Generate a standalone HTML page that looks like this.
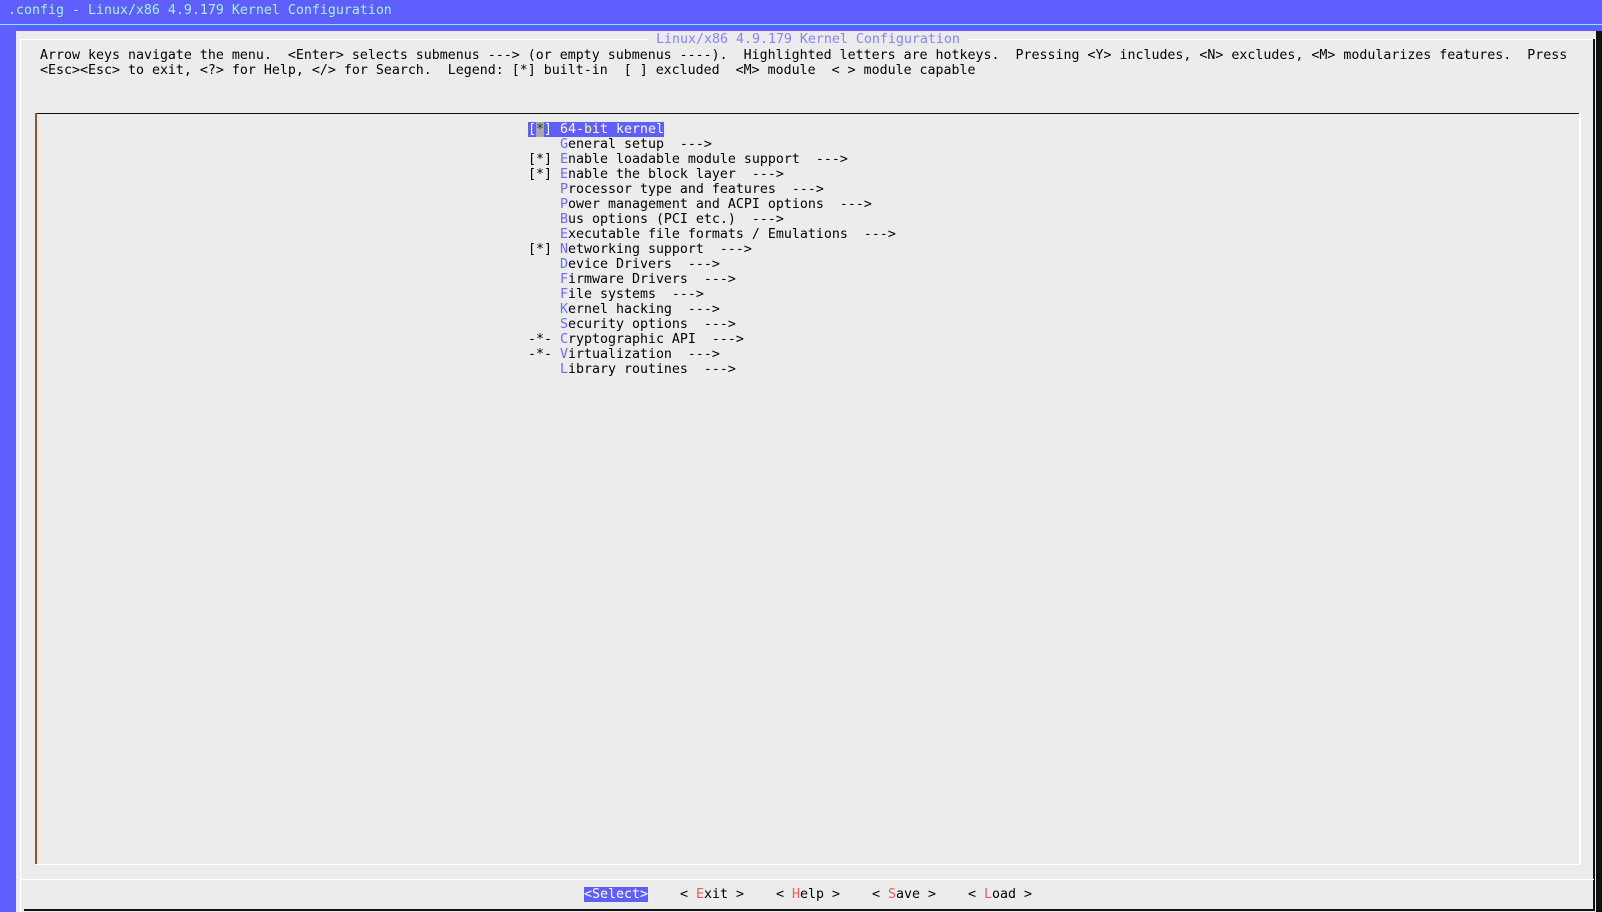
<!DOCTYPE html>
<html><head><meta charset="utf-8"><style>
html,body{margin:0;padding:0;}
body{width:1602px;height:912px;position:relative;overflow:hidden;background:#5f5fff;font-family:"DejaVu Sans Mono","Liberation Mono",monospace;font-size:13.29px;line-height:15px;color:#000;}
.t{position:absolute;white-space:pre;height:15px;margin-top:2px;}
.h{color:#6b6bff;}
.r{color:#f25a5a;}
.abs{position:absolute;}
</style></head><body>
<div class="t" style="left:8px;top:1px;color:#a8f4ff">.config - Linux/x86 4.9.179 Kernel Configuration</div>
<div class="abs" style="left:0;top:24px;width:1602px;height:1px;background:#6ff6ff"></div>
<div class="abs" style="left:1596px;top:31px;width:6px;height:881px;background:#111"></div>
<div class="abs" style="left:16px;top:31px;width:1580px;height:881px;background:#ececec"></div>
<div class="abs" style="left:20px;top:39px;width:1574px;height:1px;background:#fff"></div>
<div class="abs" style="left:20px;top:39px;width:1px;height:873px;background:#fff"></div>
<div class="abs" style="left:1593px;top:39px;width:2px;height:871px;background:#111"></div>
<div class="abs" style="left:24px;top:909px;width:1571px;height:2px;background:#111"></div>
<div class="t" style="left:648px;top:30px;padding:0 8px;background:#ececec;color:#8484ff">Linux/x86 4.9.179 Kernel Configuration</div>
<div class="t" style="left:40px;top:46px">Arrow keys navigate the menu.  &lt;Enter&gt; selects submenus ---&gt; (or empty submenus ----).  Highlighted letters are hotkeys.  Pressing &lt;Y&gt; includes, &lt;N&gt; excludes, &lt;M&gt; modularizes features.  Press</div>
<div class="t" style="left:40px;top:61px">&lt;Esc&gt;&lt;Esc&gt; to exit, &lt;?&gt; for Help, &lt;/&gt; for Search.  Legend: [*] built-in  [ ] excluded  &lt;M&gt; module  &lt; &gt; module capable</div>
<div class="abs" style="left:35px;top:113px;width:1545px;height:1px;background:#111"></div>
<div class="abs" style="left:35px;top:113px;width:2px;height:751px;background:#8a5a2a"></div>
<div class="abs" style="left:36px;top:864px;width:1545px;height:1px;background:#fff"></div>
<div class="abs" style="left:1579px;top:113px;width:2px;height:752px;background:#fff"></div>
<div class="abs" style="left:20px;top:879px;width:1574px;height:1px;background:#fff"></div>
<div class="t" style="left:528px;top:120px;background:#5f5fff;color:#fff">[<span style="background:#a8a8a8;color:#333">*</span>] 64-<span style="color:#ffff90">b</span>it kernel</div>
<div class="t" style="left:528px;top:135px">    <span class="h">G</span>eneral setup  ---&gt;</div>
<div class="t" style="left:528px;top:150px">[*] <span class="h">E</span>nable loadable module support  ---&gt;</div>
<div class="t" style="left:528px;top:165px">[*] <span class="h">E</span>nable the block layer  ---&gt;</div>
<div class="t" style="left:528px;top:180px">    <span class="h">P</span>rocessor type and features  ---&gt;</div>
<div class="t" style="left:528px;top:195px">    <span class="h">P</span>ower management and ACPI options  ---&gt;</div>
<div class="t" style="left:528px;top:210px">    <span class="h">B</span>us options (PCI etc.)  ---&gt;</div>
<div class="t" style="left:528px;top:225px">    <span class="h">E</span>xecutable file formats / Emulations  ---&gt;</div>
<div class="t" style="left:528px;top:240px">[*] <span class="h">N</span>etworking support  ---&gt;</div>
<div class="t" style="left:528px;top:255px">    <span class="h">D</span>evice Drivers  ---&gt;</div>
<div class="t" style="left:528px;top:270px">    <span class="h">F</span>irmware Drivers  ---&gt;</div>
<div class="t" style="left:528px;top:285px">    <span class="h">F</span>ile systems  ---&gt;</div>
<div class="t" style="left:528px;top:300px">    <span class="h">K</span>ernel hacking  ---&gt;</div>
<div class="t" style="left:528px;top:315px">    <span class="h">S</span>ecurity options  ---&gt;</div>
<div class="t" style="left:528px;top:330px">-*- <span class="h">C</span>ryptographic API  ---&gt;</div>
<div class="t" style="left:528px;top:345px">-*- <span class="h">V</span>irtualization  ---&gt;</div>
<div class="t" style="left:528px;top:360px">    <span class="h">L</span>ibrary routines  ---&gt;</div>
<div class="t" style="left:584px;top:885px;background:#5f5fff;color:#fff">&lt;Select&gt;</div>
<div class="t" style="left:680px;top:885px">&lt; <span class="r">E</span>xit &gt;</div>
<div class="t" style="left:776px;top:885px">&lt; <span class="r">H</span>elp &gt;</div>
<div class="t" style="left:872px;top:885px">&lt; <span class="r">S</span>ave &gt;</div>
<div class="t" style="left:968px;top:885px">&lt; <span class="r">L</span>oad &gt;</div>
</body></html>
